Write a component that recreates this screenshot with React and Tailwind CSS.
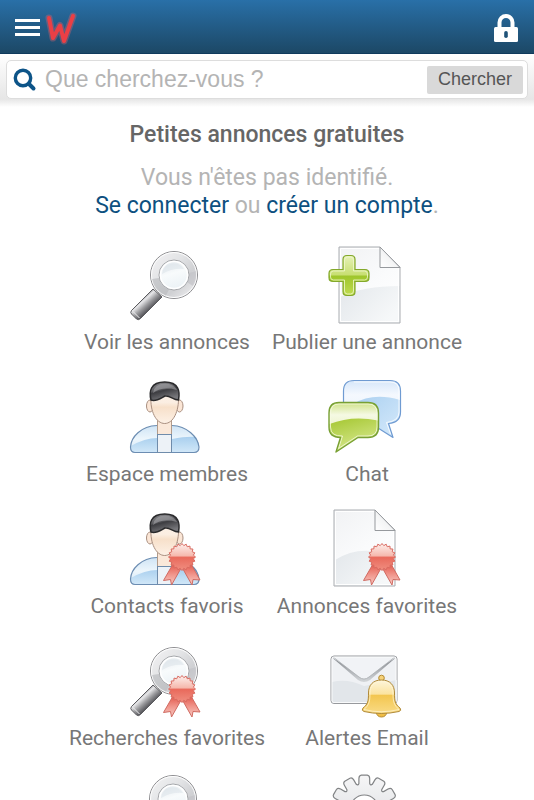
import React, { useState } from 'react';

// Outline of a shape that alternates between two radii (award seal)
const starPath = (cx, cy, outer, inner, points) => {
  const step = Math.PI / points;
  const coords = [];
  for (let i = 0; i < points * 2; i++) {
    const r = i % 2 === 0 ? outer : inner;
    coords.push(`${(cx + r * Math.sin(i * step)).toFixed(2)} ${(cy - r * Math.cos(i * step)).toFixed(2)}`);
  }
  return `M${coords.join('L')}Z`;
};

const TEETH = [0, 30, 60, 90, 120, 150, 180, 210, 240, 270, 300, 330];

const gearPath = (cx, cy) => {
  const at = (r, deg) => {
    const a = (deg * Math.PI) / 180;
    return `${(cx + r * Math.sin(a)).toFixed(2)} ${(cy - r * Math.cos(a)).toFixed(2)}`;
  };
  const parts = TEETH.map(
    (d) =>
      `L${at(26, d - 12)}L${at(31, d - 10)}Q${at(34, d - 9)} ${at(34, d - 5)}L${at(34, d + 5)}Q${at(34, d + 9)} ${at(31, d + 10)}L${at(26, d + 12)}Q${at(24, d + 15)} ${at(26, d + 18)}`
  );
  return `M${at(26, -12)}${parts.join('')}Z`;
};

// Gradients shared by all the icons
const Gradients = () => (
  <svg width="0" height="0" className="absolute" aria-hidden="true">
    <defs>
      <linearGradient id="ring" x1="0" y1="0" x2="1" y2="1">
        <stop offset="0" stopColor="#f4f4f5" />
        <stop offset="0.4" stopColor="#e2e3e5" />
        <stop offset="0.65" stopColor="#cfd0d3" />
        <stop offset="1" stopColor="#f5f5f6" />
      </linearGradient>
      <linearGradient id="gear" x1="0" y1="0" x2="0" y2="1">
        <stop offset="0" stopColor="#f6f6f7" />
        <stop offset="0.5" stopColor="#e6e7e9" />
        <stop offset="1" stopColor="#f6f6f7" />
      </linearGradient>
      <linearGradient id="lens" x1="0.3" y1="0" x2="0.6" y2="1">
        <stop offset="0" stopColor="#e2e8ed" />
        <stop offset="0.45" stopColor="#f8fbfc" />
        <stop offset="1" stopColor="#eaf1f5" />
      </linearGradient>
      <linearGradient id="handle" gradientUnits="userSpaceOnUse" x1="14" y1="54" x2="24" y2="65">
        <stop offset="0" stopColor="#77777a" />
        <stop offset="0.25" stopColor="#e8e8ea" />
        <stop offset="0.6" stopColor="#9a9a9d" />
        <stop offset="1" stopColor="#4f4f54" />
      </linearGradient>
      <linearGradient id="paper" x1="0" y1="0" x2="0.6" y2="1">
        <stop offset="0" stopColor="#f1f2f4" />
        <stop offset="0.6" stopColor="#fafbfc" />
        <stop offset="1" stopColor="#ffffff" />
      </linearGradient>
      <linearGradient id="wave" x1="0" y1="0" x2="1" y2="0.6">
        <stop offset="0" stopColor="#e3e7eb" />
        <stop offset="1" stopColor="#f6f8f9" />
      </linearGradient>
      <linearGradient id="fold" x1="0" y1="1" x2="1" y2="0">
        <stop offset="0" stopColor="#ffffff" />
        <stop offset="0.5" stopColor="#f2f3f4" />
        <stop offset="1" stopColor="#bfc2c5" />
      </linearGradient>
      <linearGradient id="plus" x1="0" y1="0" x2="0" y2="1">
        <stop offset="0" stopColor="#e6f2b8" />
        <stop offset="0.48" stopColor="#c8df73" />
        <stop offset="0.52" stopColor="#9fc62c" />
        <stop offset="1" stopColor="#c0dc50" />
      </linearGradient>
      <linearGradient id="hair" x1="0" y1="0" x2="0.4" y2="1">
        <stop offset="0" stopColor="#8b8b8e" />
        <stop offset="0.45" stopColor="#606064" />
        <stop offset="0.55" stopColor="#3d3d41" />
        <stop offset="1" stopColor="#77777b" />
      </linearGradient>
      <linearGradient id="skin" x1="0" y1="0" x2="0" y2="1">
        <stop offset="0" stopColor="#fdf1e7" />
        <stop offset="0.35" stopColor="#fbeee2" />
        <stop offset="0.5" stopColor="#f7e0ca" />
        <stop offset="1" stopColor="#fdf1e6" />
      </linearGradient>
      <linearGradient id="jacket" x1="0" y1="0" x2="0" y2="1">
        <stop offset="0" stopColor="#cfe4f5" />
        <stop offset="0.5" stopColor="#edf6fc" />
        <stop offset="1" stopColor="#d3e8f8" />
      </linearGradient>
      <linearGradient id="jacketLow" x1="0" y1="0" x2="0" y2="1">
        <stop offset="0" stopColor="#a9cfee" />
        <stop offset="1" stopColor="#d0e7f8" />
      </linearGradient>
      <linearGradient id="bubbleBlue" x1="0" y1="0" x2="0" y2="1">
        <stop offset="0" stopColor="#d6e7fa" />
        <stop offset="0.25" stopColor="#f4f8fe" />
        <stop offset="1" stopColor="#e2effb" />
      </linearGradient>
      <linearGradient id="bubbleBlueLow" x1="0" y1="0" x2="1" y2="1">
        <stop offset="0" stopColor="#aacff0" />
        <stop offset="1" stopColor="#d5eafb" />
      </linearGradient>
      <linearGradient id="bubbleGreen" x1="0" y1="0" x2="0" y2="1">
        <stop offset="0" stopColor="#cfe287" />
        <stop offset="0.25" stopColor="#f5f9e3" />
        <stop offset="1" stopColor="#dbe9a2" />
      </linearGradient>
      <linearGradient id="bubbleGreenLow" x1="0" y1="0" x2="0.4" y2="1">
        <stop offset="0" stopColor="#a4c630" />
        <stop offset="1" stopColor="#d6e88c" />
      </linearGradient>
      <linearGradient id="seal" x1="0" y1="0" x2="0" y2="1">
        <stop offset="0" stopColor="#fdf0ed" />
        <stop offset="0.45" stopColor="#f6b9ae" />
        <stop offset="0.52" stopColor="#e96a5c" />
        <stop offset="1" stopColor="#f08f81" />
      </linearGradient>
      <linearGradient id="tail" x1="0" y1="0" x2="0" y2="1">
        <stop offset="0" stopColor="#e4584b" />
        <stop offset="0.5" stopColor="#f0958b" />
        <stop offset="1" stopColor="#f8cbc4" />
      </linearGradient>
      <linearGradient id="bell" x1="0" y1="0" x2="0" y2="1">
        <stop offset="0" stopColor="#fdf6dc" />
        <stop offset="0.42" stopColor="#fbe3a0" />
        <stop offset="0.46" stopColor="#f3c650" />
        <stop offset="1" stopColor="#f9db86" />
      </linearGradient>
      <linearGradient id="flap" x1="0" y1="0" x2="0" y2="1">
        <stop offset="0" stopColor="#85898e" />
        <stop offset="1" stopColor="#d3d6d9" />
      </linearGradient>
    </defs>
  </svg>
);

const Magnifier = () => (
  <g>
    <path d="M26 45 4.5 66.5Q3 68.500 4.500 70L9.500 75Q11.500 76.500 13.500 74.500L35 53Z" fill="url(#handle)" stroke="#5a5a5e" />
    <path d="M6 67.500 12.500 74" stroke="#eeeeef" fill="none" />
    <circle cx="47" cy="31" r="23.500" fill="url(#ring)" stroke="#8e8e91" />
    <circle cx="47" cy="31" r="22.500" fill="none" stroke="#ffffff" />
    <path d="M25 35A22 22 0 0 0 39 51.500L42 45.500A15.500 15.500 0 0 1 32 34Z" fill="#b6b7bb" opacity="0.6" />
    <path d="M69 27A22 22 0 0 1 66 42L60.500 38.500A15.500 15.500 0 0 0 62.500 29Z" fill="#bfc0c4" opacity="0.6" />
    <circle cx="47" cy="31" r="15" fill="url(#lens)" stroke="#a5a6a9" />
    <circle cx="47" cy="31" r="13.500" fill="none" stroke="#ffffff" strokeWidth="1.500" />
    <path d="M35 30A12 12 0 0 1 57 25Q45 24 35 30Z" fill="#dae2e7" opacity="0.5" />
  </g>
);

// `wave` is the shaded lower part, which rises to one side or the other
const Sheet = ({ wave }) => (
  <g>
    <path d="M12 3H53L73 23V79H12Z" fill="url(#paper)" />
    <path d={wave} fill="url(#wave)" />
    <path d="M13.500 4.500H52.500L71.500 24V77.500H13.500Z" fill="none" stroke="#ffffff" />
    <path d="M12 3H53L73 23V79H12Z" fill="none" stroke="#a9acb0" strokeLinejoin="round" />
    <path d="M46 3.500H53V23.500H72.500L53 3.500Z" fill="#d7dadd" />
    <path d="M53 3V23.500H73Z" fill="url(#fold)" stroke="#96999d" strokeLinejoin="round" />
  </g>
);

const Person = () => (
  <g>
    <path d="M30 49.500C14 50 4 61 3.500 71Q3.500 76.500 8 76.500H67Q72 76.500 72 71C71 61 60 50 45 49.500Z" fill="url(#jacket)" />
    <path d="M4 70Q18 62 30 62V76H8Q4 76 4 70ZM45 63Q60 60 69 61Q72 66 71.500 71Q71.500 76 67 76H45Z" fill="url(#jacketLow)" />
    <path d="M30 49.500C14 50 4 61 3.500 71Q3.500 76.500 8 76.500H67Q72 76.500 72 71C71 61 60 50 45 49.500" fill="none" stroke="#6c8db2" strokeWidth="1.200" />
    <rect x="30.500" y="42" width="14" height="17" fill="#fae8d9" stroke="#b39c8b" />
    <rect x="30.500" y="58.500" width="14" height="18" fill="#edf2f7" stroke="#6f8cab" />
    <ellipse cx="23" cy="30" rx="3.500" ry="6" fill="#fbe6d6" stroke="#a98f80" />
    <ellipse cx="52.500" cy="30" rx="3.500" ry="6" fill="#fbe6d6" stroke="#a98f80" />
    <path d="M24 21C23 35 29 47.500 37.700 47.500S52 35 51.500 21L38 15Z" fill="url(#skin)" stroke="#a98f80" />
    <path d="M24 24C22 16 23 6 37.700 6S53 16 51.500 24C46 24 43 19 38 20C34 22 29 26 24 24Z" fill="url(#hair)" stroke="#2a2a2c" strokeWidth="1.500" />
    <path d="M26 17Q35 10 50 14Q47 8 38 7.500Q27 8 26 17Z" fill="#a9a9ad" opacity="0.55" />
  </g>
);

const Ribbon = () => (
  <g strokeLinejoin="round">
    <path d="M46 56 36.500 72.500 43.500 71.500 44.500 77 55 58.500Z" fill="url(#tail)" stroke="#d06a61" />
    <path d="M64 56 73 72 66 71.500 65 77 54.500 58.500Z" fill="url(#tail)" stroke="#d06a61" />
    <path d={starPath(55, 49, 13.5, 11.5, 20)} fill="url(#seal)" stroke="#d96a60" />
  </g>
);

const ICONS = {
  search: <Magnifier />,
  publish: (
    <g>
      <Sheet wave="M13 53Q36 42 73 42V79H13Z" />
      <path
        d="M20 11.500H24Q28 11.500 28 15.500V25.500H38Q42 25.500 42 29.500V33.500Q42 37.500 38 37.500H28V47.500Q28 51.500 24 51.500H20Q16 51.500 16 47.500V37.500H6Q2 37.500 2 33.500V29.500Q2 25.500 6 25.500H16V15.500Q16 11.500 20 11.500Z"
        fill="url(#plus)"
        stroke="#83a82b"
        strokeWidth="1.200"
      />
      <path
        d="M20.500 13H23.500Q26.500 13 26.500 16V27H37.500Q40.500 27 40.500 30V33Q40.500 36 37.500 36H26.500V47Q26.500 50 23.500 50H20.500Q17.500 50 17.500 47V36H6.500Q3.500 36 3.500 33V30Q3.500 27 6.500 27H17.500V16Q17.500 13 20.500 13Z"
        fill="none"
        stroke="#f0f7cf"
        opacity="0.8"
      />
    </g>
  ),
  members: <Person />,
  chat: (
    <g strokeLinejoin="round">
      <path d="M27 4.500H63Q73.500 4.500 73.500 15V36Q73.500 46.500 61.500 47.500L66 61.500 51 52H25Q16.500 47 16.500 38V15Q16.500 4.500 27 4.500Z" fill="url(#bubbleBlue)" />
      <path d="M26 28Q46 16 73 24V36Q73 46 61.500 47.500L66 61 51 52H40Z" fill="url(#bubbleBlueLow)" />
      <path d="M27 4.500H63Q73.500 4.500 73.500 15V36Q73.500 46.500 61.500 47.500L66 61.500 51 52H25Q16.500 47 16.500 38V15Q16.500 4.500 27 4.500Z" fill="none" stroke="#6f9bd2" strokeWidth="1.200" />
      <path d="M27 6H63Q72 6 72 15V36Q72 45 59.500 46.500L63.500 58" fill="none" stroke="#ffffff" opacity="0.8" />
      <path d="M12 26.500H41Q51.500 26.500 51.500 37V51Q51.500 61.500 41 61.500H31L9 76 13.500 61.500Q2 61.500 2 51V37Q2 26.500 12 26.500Z" fill="url(#bubbleGreen)" />
      <path d="M2.500 48Q25 39 51 44.500V51Q51 61 41 61.500H31L9.500 75.500 13.500 61.500Q2.500 61 2.500 51Z" fill="url(#bubbleGreenLow)" />
      <path d="M12 28H41Q50 28 50 37V51Q50 60 41 60H30.500L11.500 72.500 15.500 60Q3.500 60.500 3.500 51V37Q3.500 28 12 28Z" fill="none" stroke="#f6fae2" opacity="0.8" />
      <path d="M12 26.500H41Q51.500 26.500 51.500 37V51Q51.500 61.500 41 61.500H31L9 76 13.500 61.500Q2 61.500 2 51V37Q2 26.500 12 26.500Z" fill="none" stroke="#78a034" strokeWidth="1.400" />
    </g>
  ),
  favContacts: (
    <g>
      <Person />
      <Ribbon />
    </g>
  ),
  favAds: (
    <g>
      <g transform="translate(-5 -1)">
        <Sheet wave="M13 53Q30 42 50 44Q64 48 73 45V79H13Z" />
      </g>
      <Ribbon />
    </g>
  ),
  favSearches: (
    <g>
      <Magnifier />
      <Ribbon />
    </g>
  ),
  alerts: (
    <g strokeLinejoin="round">
      <rect x="4" y="16" width="66" height="47.500" rx="3" fill="#eff1f4" stroke="#97999d" />
      <path d="M5 42Q20 38 37 46L70 40V60Q70 63 67 63H7Q5 63 5 60Z" fill="#e2e6ea" />
      <path d="M5 17.500 31 40Q37 44 43 40L69 17.500 42 34Q37 38 32 34Z" fill="url(#flap)" />
      <path d="M5.500 16.500H68.500L42 37Q37 41 32 37Z" fill="#f1f3f6" stroke="#aaadb1" strokeWidth="0.800" />
      <rect x="5" y="17" width="64" height="45.500" rx="2" fill="none" stroke="#ffffff" opacity="0.8" />
      <path d="M49 72Q50 77 54.500 77T60 72Z" fill="#f0bd45" stroke="#b58c32" />
      <circle cx="54.500" cy="38" r="2.800" fill="#f6d27a" stroke="#b58c32" />
      <path d="M54.500 40C46 40 41.500 45 41.500 53C41.500 61 41 64 36 68Q34 70.500 37 71.500Q54 75.500 72 71.500Q75 70.500 73 68C68 64 67.500 61 67.500 53C67.500 45 63 40 54.500 40Z" fill="url(#bell)" stroke="#b08a3a" />
      <path d="M54.500 41.500C47 41.500 43 46 43 53C43 62 42 65 37 69.500Q54 74 72 69.500C67 65 66 62 66 53C66 46 62 41.500 54.500 41.500Z" fill="none" stroke="#fff6d8" opacity="0.7" />
    </g>
  ),
  saved: (
    <g transform="translate(-1 -4)">
      <Magnifier />
    </g>
  ),
  settings: (
    <g>
      <path d={gearPath(37.3, 37)} fill="url(#gear)" stroke="#828486" strokeWidth="1.200" />
      <circle cx="37.300" cy="37" r="14" fill="#ffffff" stroke="#828486" strokeWidth="1.200" />
    </g>
  ),
};

const MENU = [
  { icon: 'search', label: 'Voir les annonces' },
  { icon: 'publish', label: 'Publier une annonce' },
  { icon: 'members', label: 'Espace membres' },
  { icon: 'chat', label: 'Chat' },
  { icon: 'favContacts', label: 'Contacts favoris' },
  { icon: 'favAds', label: 'Annonces favorites' },
  { icon: 'favSearches', label: 'Recherches favorites' },
  { icon: 'alerts', label: 'Alertes Email' },
  { icon: 'saved' },
  { icon: 'settings' },
];

const MenuItem = ({ icon, label }) => (
  <a href="#" className="flex flex-col items-center gap-1 text-[21px] leading-7 text-[#777777]">
    <svg viewBox="0 0 80 80" className="h-20 w-20" aria-hidden="true">
      {ICONS[icon]}
    </svg>
    {label && <span className="whitespace-nowrap">{label}</span>}
  </a>
);

const Header = () => (
  <header className="flex h-[54px] items-center justify-between border-b border-[#0f3a5c] bg-gradient-to-b from-[#2970a8] to-[#1c4866] px-[15px] pt-[2px]">
    <div className="flex items-center gap-1">
      <button type="button" aria-label="Menu" className="flex w-[25px] flex-col gap-1">
        <span className="h-[3px] w-full bg-white" />
        <span className="h-[3px] w-full bg-white" />
        <span className="h-[3px] w-full bg-white" />
      </button>
      <a href="#" aria-label="Accueil">
        <svg viewBox="0 0 36 36" className="h-9 w-9" fill="none" strokeLinecap="round" strokeLinejoin="round">
          <path d="M5 8 9 28 16 15.500 20 31 29 6" stroke="#e9606a" strokeWidth="7" opacity="0.35" />
          <path d="M5 8 9 28 16 15.500 20 31 29 6" stroke="#ea3f45" strokeWidth="4" />
        </svg>
      </a>
    </div>
    <button type="button" aria-label="Connexion">
      <svg viewBox="0 0 26 30" className="h-[30px] w-[26px]">
        <path d="M6.500 16V9.500a6.500 6.500 0 0 1 13 0V16" fill="none" stroke="#ffffff" strokeWidth="4" />
        <rect x="1" y="14" width="24" height="15" rx="1.500" fill="#ffffff" />
        <rect x="11.200" y="18" width="3.600" height="7" rx="1.800" fill="#1f5278" />
      </svg>
    </button>
  </header>
);

const SearchBar = () => {
  const [query, setQuery] = useState('');

  return (
    <div className="bg-gradient-to-b from-white via-[#e6e6e6] via-85% to-white px-[6px] pt-[6px] pb-2">
      <form
        onSubmit={(e) => e.preventDefault()}
        className="flex h-[39px] items-center gap-2 rounded-[5px] border border-[#dddddd] bg-white px-1"
      >
        <label htmlFor="query" className="pl-[2px]">
          <svg viewBox="0 0 24 24" className="h-6 w-6" fill="none" stroke="#0d5488" role="img" aria-label="Recherche">
            <circle cx="10" cy="10" r="7.700" strokeWidth="3.400" />
            <path d="M16 16 20.500 20.500" strokeWidth="4" strokeLinecap="round" />
          </svg>
        </label>
        <input
          id="query"
          type="text"
          value={query}
          onChange={(e) => setQuery(e.target.value)}
          placeholder="Que cherchez-vous ?"
          className="h-8 min-w-0 flex-1 font-['Liberation_Sans',Arial,sans-serif] text-[23px] leading-7 text-[#555555] outline-none placeholder:text-[#b4b4b4]"
        />
        <button
          type="submit"
          className="h-7 rounded-[2px] bg-[#d9d9d9] px-[11px] font-['Liberation_Sans',Arial,sans-serif] text-[18px] text-[#555555]"
        >
          Chercher
        </button>
      </form>
    </div>
  );
};

export default function App() {
  return (
    <div className="h-screen overflow-hidden bg-white font-[Roboto,sans-serif]">
      <Gradients />
      <Header />
      <SearchBar />
      <main className="pt-[14px] text-center">
        <h1 className="text-[23px] leading-7 font-medium text-[#666666]">Petites annonces gratuites</h1>
        <p className="mt-[15px] text-[23px] leading-7 text-[#b4b4b4]">
          Vous n'êtes pas identifié.
          <br />
          <a href="#" className="text-[#0d5080]">Se connecter</a> ou{' '}
          <a href="#" className="text-[#0d5080]">créer un compte</a>.
        </p>
        <nav className="mx-auto mt-6 grid w-full max-w-[400px] grid-cols-2 gap-y-5">
          {MENU.map((item) => (
            <MenuItem key={item.icon} icon={item.icon} label={item.label} />
          ))}
        </nav>
      </main>
    </div>
  );
}
